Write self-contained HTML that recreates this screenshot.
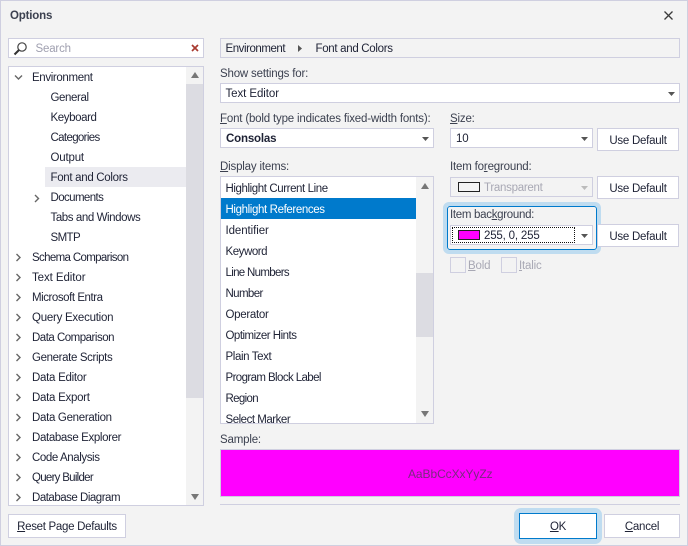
<!DOCTYPE html>
<html><head><meta charset="utf-8"><style>
html,body{margin:0;padding:0}
#w{position:relative;width:688px;height:546px;overflow:hidden;background:#f3f3f3;font:11.5px/16px "Liberation Sans",sans-serif;color:#1e2235;box-sizing:border-box}
#w div,#w span.a,#w svg{position:absolute;box-sizing:border-box}
.t{white-space:nowrap;letter-spacing:-.18px;margin-top:1px}
.b{border:1px solid #cfcfe0;background:#fff}
.l{color:#3c4150}
.btn{border:1px solid #cfcfe0;background:#fff;text-align:center;line-height:24px;white-space:nowrap;letter-spacing:-.25px}
u{text-decoration-thickness:1px;text-underline-offset:1px}
</style></head><body><div id="w">
<div style="left:0;top:0;width:688px;height:546px;border:1px solid #cfcfe0"></div>
<div class="t" style="left:10px;top:7px;font-weight:bold;color:#3c4150">Options</div>
<svg style="left:664px;top:11px" width="9" height="9"><path d="M.5 .5L8.500 8.500M8.500 .5L.5 8.500" stroke="#3a3a3a" stroke-width="1.3"/></svg>

<div class="b" style="left:8px;top:38px;width:196px;height:20px"></div>
<svg style="left:13px;top:41px" width="15" height="15"><circle cx="9" cy="6" r="4.2" fill="none" stroke="#444" stroke-width="1.2"/><path d="M6 9L1.5 13.5" stroke="#333" stroke-width="2"/></svg>
<div class="t" style="left:35.500px;top:40px;color:#a0a0b0">Search</div>
<svg style="left:191px;top:44px" width="8" height="8"><path d="M1 1L7 7M7 1L1 7" stroke="#a83a30" stroke-width="1.7"/></svg>

<div class="b" style="left:8px;top:66px;width:196px;height:440px"></div>
<div style="left:186px;top:84px;width:17px;height:314px;background:#dcdce2"></div>
<div style="left:186px;top:67px;width:17px;height:17px;background:#f3f3f3"></div>
<div style="left:186px;top:398px;width:17px;height:107px;background:#f3f3f3"></div>
<svg style="left:191px;top:72px" width="8" height="6"><path d="M4 0L8 6H0Z" fill="#777"/></svg>
<svg style="left:191px;top:494px" width="8" height="6"><path d="M4 6L8 0H0Z" fill="#777"/></svg>
<div style="left:45px;top:167px;width:141px;height:20px;background:#ebebf0"></div>
<svg style="left:0;top:0" width="60" height="510" fill="none" stroke="#666" stroke-width="1.4">
<path d="M15 75.5L18.500 79L22 75.500"/>
<path d="M35 195L38.500 198.500L35 202"/>
<path d="M16.500 254L20 257.500L16.500 261"/><path d="M16.500 274L20 277.500L16.500 281"/><path d="M16.500 294L20 297.500L16.500 301"/><path d="M16.500 314L20 317.500L16.500 321"/><path d="M16.500 334L20 337.500L16.500 341"/><path d="M16.500 354L20 357.500L16.500 361"/><path d="M16.500 374L20 377.500L16.500 381"/><path d="M16.500 394L20 397.500L16.500 401"/><path d="M16.500 414L20 417.500L16.500 421"/><path d="M16.500 434L20 437.500L16.500 441"/><path d="M16.500 454L20 457.500L16.500 461"/><path d="M16.500 474L20 477.500L16.500 481"/><path d="M16.500 494L20 497.500L16.500 501"/>
</svg>
<div class="t" style="left:32px;top:69px;letter-spacing:-.36px">Environment</div>
<div class="t" style="left:50.500px;top:89px;letter-spacing:-.4px">General</div>
<div class="t" style="left:50.500px;top:109px;letter-spacing:-.4px">Keyboard</div>
<div class="t" style="left:50.500px;top:129px;letter-spacing:-.65px">Categories</div>
<div class="t" style="left:50.500px;top:149px">Output</div>
<div class="t" style="left:50.500px;top:169px;letter-spacing:-.31px">Font and Colors</div>
<div class="t" style="left:50.500px;top:189px;letter-spacing:-.6px">Documents</div>
<div class="t" style="left:50.500px;top:209px;letter-spacing:-.42px">Tabs and Windows</div>
<div class="t" style="left:50.500px;top:229px;letter-spacing:-.6px">SMTP</div>
<div class="t" style="left:32px;top:249px;letter-spacing:-.65px">Schema Comparison</div>
<div class="t" style="left:32px;top:269px;letter-spacing:-.08px">Text Editor</div>
<div class="t" style="left:32px;top:289px;letter-spacing:-.45px">Microsoft Entra</div>
<div class="t" style="left:32px;top:309px;letter-spacing:-.25px">Query Execution</div>
<div class="t" style="left:32px;top:329px;letter-spacing:-.5px">Data Comparison</div>
<div class="t" style="left:32px;top:349px;letter-spacing:-.37px">Generate Scripts</div>
<div class="t" style="left:32px;top:369px;letter-spacing:-.28px">Data Editor</div>
<div class="t" style="left:32px;top:389px;letter-spacing:-.28px">Data Export</div>
<div class="t" style="left:32px;top:409px;letter-spacing:-.31px">Data Generation</div>
<div class="t" style="left:32px;top:429px;letter-spacing:-.36px">Database Explorer</div>
<div class="t" style="left:32px;top:449px;letter-spacing:-.41px">Code Analysis</div>
<div class="t" style="left:32px;top:469px;letter-spacing:-.72px">Query Builder</div>
<div class="t" style="left:32px;top:489px;letter-spacing:-.49px">Database Diagram</div>

<div class="btn" style="left:8px;top:514px;width:118px;height:24px;letter-spacing:-.3px"><u>R</u>eset Page Defaults</div>

<div style="left:220px;top:38px;width:460px;height:20px;border:1px solid #cfcfe0"></div>
<div class="t" style="left:225.500px;top:40px;letter-spacing:-.45px">Environment</div>
<svg style="left:298px;top:45px" width="5" height="7"><path d="M0 0L4 3.500L0 7Z" fill="#555"/></svg>
<div class="t" style="left:315.500px;top:40px;letter-spacing:-.31px">Font and Colors</div>

<div class="t l" style="left:220px;top:65px">Show settings for:</div>
<div class="b" style="left:220px;top:83px;width:460px;height:20px"></div>
<div class="t" style="left:225.500px;top:85px;letter-spacing:-.08px">Text Editor</div>
<svg style="left:668px;top:92px" width="7" height="4"><path d="M0 0H7L3.500 4Z" fill="#555"/></svg>

<div class="t l" style="left:220px;top:110px"><u>F</u>ont (bold type indicates fixed-width fonts):</div>
<div class="b" style="left:220px;top:128px;width:214px;height:20px"></div>
<div class="t" style="left:226px;top:130px;font-weight:bold">Consolas</div>
<svg style="left:422px;top:137px" width="7" height="4"><path d="M0 0H7L3.500 4Z" fill="#555"/></svg>

<div class="t l" style="left:220px;top:158px"><u>D</u>isplay items:</div>
<div class="b" style="left:220px;top:176px;width:214px;height:248px;overflow:hidden"></div>
<div style="left:416px;top:177px;width:17px;height:246px;background:#f3f3f3"></div>
<div style="left:416px;top:273px;width:17px;height:64px;background:#dcdce2"></div>
<svg style="left:421px;top:183px" width="8" height="6"><path d="M4 0L8 6H0Z" fill="#777"/></svg>
<svg style="left:421px;top:411px" width="8" height="6"><path d="M4 6L8 0H0Z" fill="#777"/></svg>
<div style="left:221px;top:198px;width:195px;height:21px;background:#007acc"></div>
<div class="t" style="left:225.500px;top:180px;letter-spacing:-.41px">Highlight Current Line</div>
<div class="t" style="left:225.500px;top:201px;color:#fff;letter-spacing:-.38px">Highlight References</div>
<div class="t" style="left:225.500px;top:222px;letter-spacing:-.08px">Identifier</div>
<div class="t" style="left:225.500px;top:243px;letter-spacing:-.45px">Keyword</div>
<div class="t" style="left:225.500px;top:264px;letter-spacing:-.68px">Line Numbers</div>
<div class="t" style="left:225.500px;top:285px;letter-spacing:-.62px">Number</div>
<div class="t" style="left:225.500px;top:306px;letter-spacing:-.3px">Operator</div>
<div class="t" style="left:225.500px;top:327px;letter-spacing:-.51px">Optimizer Hints</div>
<div class="t" style="left:225.500px;top:348px;letter-spacing:-.38px">Plain Text</div>
<div class="t" style="left:225.500px;top:369px;letter-spacing:-.6px">Program Block Label</div>
<div class="t" style="left:225.500px;top:390px;letter-spacing:-.65px">Region</div>
<div style="left:221px;top:405px;width:195px;height:18px;overflow:hidden"><div class="t" style="left:4.500px;top:6px;letter-spacing:-.48px">Select Marker</div></div>

<div class="t l" style="left:450px;top:110px"><u>S</u>ize:</div>
<div class="b" style="left:450px;top:128px;width:143px;height:20px"></div>
<div class="t" style="left:456px;top:130px">10</div>
<svg style="left:581px;top:137px" width="7" height="4"><path d="M0 0H7L3.500 4Z" fill="#555"/></svg>
<div class="btn" style="left:597px;top:128px;width:82px;height:23px">Use Default</div>

<div class="t l" style="left:450px;top:158px">Item fo<u>r</u>eground:</div>
<div style="left:450px;top:177px;width:143px;height:20px;border:1px solid #cfcfe0;background:#f3f3f3"></div>
<div style="left:458px;top:182px;width:22px;height:10px;border:1px solid #222"></div>
<div class="t" style="left:484px;top:179px;color:#a8a8b4;letter-spacing:-.27px">Transparent</div>
<svg style="left:581px;top:186px" width="7" height="4"><path d="M0 0H7L3.500 4Z" fill="#bbb"/></svg>
<div class="btn" style="left:597px;top:176px;width:82px;height:23px">Use Default</div>

<div style="left:443px;top:202px;width:158px;height:52px;border:4px solid #bfdcf0;border-radius:6px;background:#f3f3f3"></div>
<div style="left:447px;top:206px;width:150px;height:44px;border:1px solid #007acc;border-radius:3px"></div>
<div class="t l" style="left:450px;top:206px;letter-spacing:-.3px">Item bac<u>k</u>ground:</div>
<div class="b" style="left:450px;top:225px;width:143px;height:20px"></div>
<div style="left:452px;top:227px;width:123px;height:16px;border:1px dotted #111"></div>
<div style="left:458px;top:230px;width:22px;height:10px;border:1px solid #222;background:#ff00ff"></div>
<div class="t" style="left:484px;top:227px">255, 0, 255</div>
<svg style="left:581px;top:234px" width="7" height="4"><path d="M0 0H7L3.500 4Z" fill="#555"/></svg>
<div class="btn" style="left:597px;top:224px;width:82px;height:23px">Use Default</div>

<div style="left:450px;top:257px;width:16px;height:16px;border:1px solid #cfcfe0"></div>
<div class="t" style="left:468px;top:257px;color:#a8a8b4"><u>B</u>old</div>
<div style="left:501px;top:257px;width:16px;height:16px;border:1px solid #cfcfe0"></div>
<div class="t" style="left:519px;top:257px;color:#a8a8b4"><u>I</u>talic</div>

<div class="t l" style="left:220px;top:431px">Sample:</div>
<div style="left:220px;top:449px;width:460px;height:48px;border:1px solid #cfcfe0;background:#ff00ff"></div>
<div class="t" style="left:408px;top:465px;color:#7a2a80;font-size:12px;letter-spacing:-.07px">AaBbCcXxYyZz</div>
<div style="left:220px;top:504px;width:460px;height:1px;background:#cfcfe0"></div>

<div style="left:514px;top:508px;width:88px;height:36px;background:#bfdcf0;border-radius:7px"></div>
<div class="btn" style="left:519px;top:513px;width:78px;height:26px;border-color:#007acc;line-height:26px"><u>O</u>K</div>
<div class="btn" style="left:604px;top:514px;width:76px;height:24px"><u>C</u>ancel</div>
</div></body></html>
